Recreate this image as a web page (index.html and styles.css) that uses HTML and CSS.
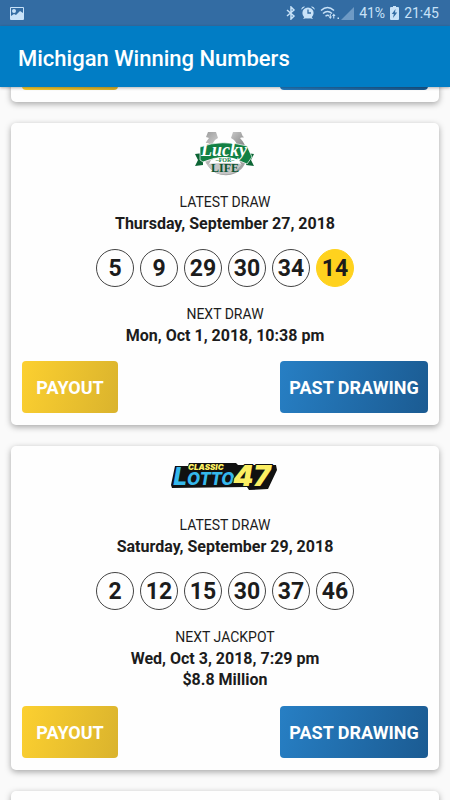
FILE: index.html
```html
<!DOCTYPE html>
<html lang="en">
<head>
<meta charset="utf-8">
<meta name="viewport" content="width=device-width, initial-scale=1">
<title>Michigan Winning Numbers</title>
<link rel="stylesheet" href="styles.css">
</head>
<body>
<div class="status">
  <svg class="status-photo" width="14" height="13" viewBox="0 0 14 13" aria-hidden="true">
    <path fill-rule="evenodd" d="M1 0h12a1 1 0 0 1 1 1v11a1 1 0 0 1-1 1H1a1 1 0 0 1-1-1V1a1 1 0 0 1 1-1zM1 1v8l3-2 2 1 4-4 3 2V1z"/>
    <circle cx="4" cy="4" r="2"/>
  </svg>
  <div class="status-right">
    <svg width="10" height="14" viewBox="0 0 10 14" aria-hidden="true"><path class="line" d="M1 4l7 6-3 3V1l3 3-7 6"/></svg>
    <svg class="alarm" width="14" height="14" viewBox="0 0 14 14" aria-hidden="true">
      <circle cx="7" cy="7" r="5.6"/><path d="M.3 3.8A3 3 0 0 1 4 .7zM13.7 3.8A3 3 0 0 0 10 .7zM2 13l2-3 2 2zM12 13l-2-3-2 2z"/><path class="cut" d="M7 3.5V7h3"/>
    </svg>
    <svg class="wifi" width="19" height="14" viewBox="0 0 19 14" aria-hidden="true">
      <path class="line" d="M1 4.500q6.500-6 13 0M3 7.500q4.500-4 9 0M5.500 10.300q2-1.700 3.500-.5"/>
      <path d="M8.500 10.500h1.300V8h1v2.500h1.300L10.300 13zM13.200 12.500V10H12l1.800-2.500 1.800 2.500h-1.300v2.500zM17.500 11.500H19V13h-1.500z"/>
    </svg>
    <svg class="signal" width="13" height="13" viewBox="0 0 13 13" aria-hidden="true"><path class="faint" d="M13 0v13H0z"/></svg>
    <span class="percent">41%</span>
    <svg class="battery" width="9" height="14" viewBox="0 0 9 14" aria-hidden="true"><path d="M3 0h3v1h2a1 1 0 0 1 1 1v11a1 1 0 0 1-1 1H1a1 1 0 0 1-1-1V2a1 1 0 0 1 1-1h2z"/><path class="bolt" d="M5.500 3L1.800 8h2L3 12l4.200-5.500H5z"/></svg>
    <span>21:45</span>
  </div>
</div>
<header class="app-bar"><h1>Michigan Winning Numbers</h1></header>
<main class="draws">
  <section class="card card-first">
    <div class="actions">
      <button class="btn btn-payout" type="button" aria-label="Payout"></button>
      <button class="btn btn-past" type="button" aria-label="Past drawing"></button>
    </div>
  </section>

  <section class="card">
    <div class="logo">
      <svg width="62" height="44" viewBox="0 0 62 44" role="img" aria-label="Lucky for Life">
        <defs><linearGradient id="steel" x1="0" y1="0" x2="1" y2="1"><stop offset="0" stop-color="#999"/><stop offset=".3" stop-color="#ccc"/><stop offset=".6" stop-color="#8c8c8c"/><stop offset="1" stop-color="#b4b4b4"/></linearGradient></defs>
        <path fill="url(#steel)" d="M14 1h8l2 6-3 2C17 14 15 22 20 29c5 6 16 6 21 0 5-7 4-15-1-20l-3-2 2-6h8l2 5-3 1c8 8 9 21 3 29-8 11-26 11-34 0C7 28 8 15 15 7l-3-1z"/>
        <path fill="#0c6535" d="M1 23l8-1v12l-8 1 3-6zM60 23l-8-1v12l8 1-3-6z"/>
        <path fill="#128044" stroke="#fff" stroke-width=".7" d="M6 16q22-8 47-1l5 11-5 7q-22-12-44-2l-3-2z"/>
        <path fill="#fff" d="M17 29q14-6 28 0l2 4H15z"/>
        <path fill="#c4c4c4" d="M13 33q17-2 35 0-4 6-9 9-8 3-17 0-6-3-9-9z"/>
        <text class="lucky" x="30" y="25" text-anchor="middle">Lucky</text>
        <text class="for" x="31" y="31" text-anchor="middle">–FOR–</text>
        <text class="life" x="31" y="41" text-anchor="middle">LIFE</text>
        <circle cx="49" cy="6" r=".6" fill="#888"/>
      </svg>
    </div>
    <p class="label">LATEST DRAW</p>
    <p class="value">Thursday, September 27, 2018</p>
    <ul class="balls">
      <li>5</li><li>9</li><li>29</li><li>30</li><li>34</li><li class="bonus">14</li>
    </ul>
    <p class="label">NEXT DRAW</p>
    <p class="value">Mon, Oct 1, 2018, 10:38 pm</p>
    <div class="actions">
      <button class="btn btn-payout" type="button">PAYOUT</button>
      <button class="btn btn-past" type="button">PAST DRAWING</button>
    </div>
  </section>

  <section class="card">
    <div class="logo">
      <svg width="110" height="32" viewBox="0 0 110 32" role="img" aria-label="Classic Lotto 47">
        <path fill="#111" d="M5 6h13l1-3h47l2 2h38l1 5-9 19-19 1-2-3-75 1-1-3z"/>
        <text class="lotto" x="3" y="25"><tspan class="lotto-cap">L</tspan>OTTO</text>
        <text class="classic" x="18" y="10">CLASSIC</text>
        <text class="forty" x="63" y="26">47</text>
      </svg>
    </div>
    <p class="label">LATEST DRAW</p>
    <p class="value">Saturday, September 29, 2018</p>
    <ul class="balls">
      <li>2</li><li>12</li><li>15</li><li>30</li><li>37</li><li>46</li>
    </ul>
    <p class="label">NEXT JACKPOT</p>
    <p class="value">Wed, Oct 3, 2018, 7:29 pm</p>
    <p class="value amount">$8.8 Million</p>
    <div class="actions">
      <button class="btn btn-payout" type="button">PAYOUT</button>
      <button class="btn btn-past" type="button">PAST DRAWING</button>
    </div>
  </section>

  <section class="card card-next"></section>
</main>
</body>
</html>
```

FILE: styles.css
```css
* { box-sizing: border-box; }

body {
  margin: 0;
  height: 100vh;
  display: flex;
  flex-direction: column;
  overflow: hidden;
  background: #fafafa;
  color: #1c1c1c;
  font-family: Roboto, "Liberation Sans", sans-serif;
}

h1, p, ul { margin: 0; padding: 0; }

.status {
  flex: none;
  display: flex;
  justify-content: space-between;
  align-items: center;
  height: 26px;
  padding: 0 11px 0 10px;
  background: #336ca3;
  color: #c8e2f8;
  font-size: 14px;
}

.status svg { fill: #c8e2f8; }
.status .line { fill: none; stroke: #c8e2f8; stroke-width: 1.5; }
.status .cut { fill: none; stroke: #336ca3; stroke-width: 1.3; }
.status .bolt { fill: #336ca3; }
.status .faint { opacity: .4; }
.status-right { display: flex; align-items: center; gap: 5px; }
.signal { margin-left: -3px; }

.app-bar {
  flex: none;
  display: flex;
  align-items: center;
  height: 61px;
  padding: 3px 18px 0;
  background: #017dc5;
  color: #fff;
  box-shadow: 0 1px 3px rgba(0, 0, 0, .3);
  z-index: 1;
}

.app-bar h1 { font-size: 22px; font-weight: 500; }

.draws {
  flex: 1;
  min-height: 0;
  overflow: hidden;
  display: flex;
  flex-direction: column;
  gap: 21px;
  padding: 0 11px;
}

.card {
  flex: none;
  padding: 8px 11px 12px;
  border-radius: 5px;
  background: #fefefe;
  box-shadow: 0 2px 6px rgba(0, 0, 0, .34);
  text-align: center;
}

.card-first { margin-top: -72px; }
.card-next { height: 64px; }

.logo {
  display: flex;
  align-items: center;
  justify-content: center;
  height: 44px;
  margin-bottom: 17px;
}

.logo svg { overflow: visible; }

.label { font-size: 14px; font-weight: 400; line-height: 21px; }
.value { font-size: 16px; font-weight: 700; line-height: 21px; }
.amount { line-height: 22px; }

.balls {
  display: flex;
  justify-content: center;
  gap: 6px;
  margin: 15px 0 17px;
  list-style: none;
}

.balls li {
  width: 38px;
  height: 38px;
  border: 1px solid #444;
  border-radius: 50%;
  font-size: 23px;
  font-weight: 700;
  line-height: 38px;
}

.balls .bonus { border-color: #ffd21e; background: #ffd21e; }

.actions { display: flex; justify-content: space-between; margin-top: 15px; }

.btn {
  height: 52px;
  padding: 0;
  border: 0;
  border-radius: 4px;
  color: #fff;
  font: 700 18px Roboto, "Liberation Sans", sans-serif;
}

.btn-payout { width: 96px; background: linear-gradient(105deg, #fcd030, #dab32d); }
.btn-past { width: 148px; background: linear-gradient(105deg, #277fc4, #1b5b92); }

.lucky { font: italic 700 18px "Liberation Serif", serif; fill: #fff; }
.for { font: 700 6px "Liberation Serif", serif; fill: #128044; }
.life { font: 700 12px "Liberation Serif", serif; fill: #0c5530; }
.lotto { font: italic 700 17px "DejaVu Sans Condensed", "DejaVu Sans", sans-serif; fill: #35b8ec; stroke: #111; stroke-width: 1px; paint-order: stroke; }
.lotto-cap { font-size: 25px; }
.classic { font: italic 900 8px Inter, sans-serif; fill: #fbee62; }
.forty { font: italic 900 29px Inter, sans-serif; fill: #fbee62; stroke: #111; stroke-width: 2px; paint-order: stroke; }
```
